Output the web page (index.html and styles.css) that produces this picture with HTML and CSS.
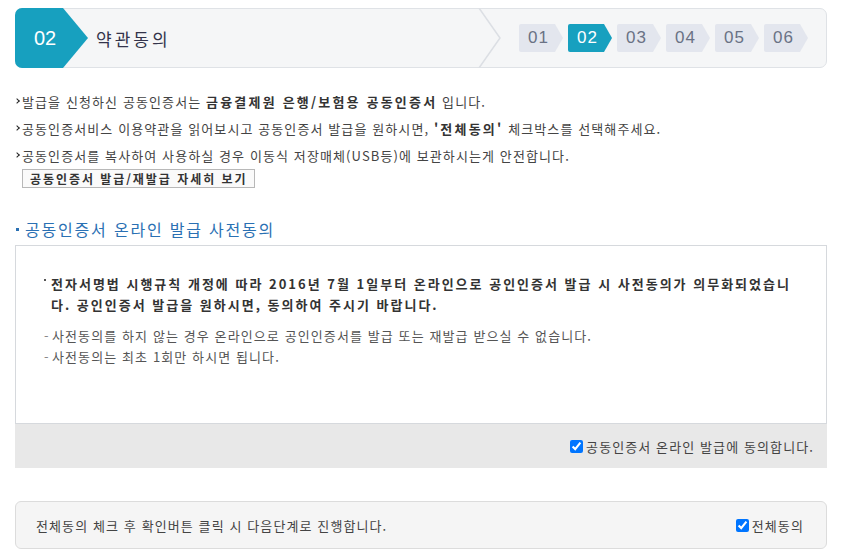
FILE: index.html
```html
<!DOCTYPE html>
<html lang="ko">
<head>
<meta charset="utf-8">
<link rel="stylesheet" href="styles.css">
</head>
<body>
<div class="wrap">
  <div class="header">
    <div class="tab"><span class="tab-num">02</span></div>
    <div class="title">약관동의</div>
    <svg class="divider" width="24" height="60" viewBox="0 0 24 60"><polyline points="1,0 22,30 1,60" fill="none" stroke="#dcdfe4" stroke-width="1.5"/></svg>
    <div class="steps">
      <span class="step">01</span>
      <span class="step active">02</span>
      <span class="step">03</span>
      <span class="step">04</span>
      <span class="step">05</span>
      <span class="step">06</span>
    </div>
  </div>

  <ul class="notice">
    <li>발급을 신청하신 공동인증서는 <b>금융결제원 은행/보험용 공동인증서</b> 입니다.</li>
    <li>공동인증서비스 이용약관을 읽어보시고 공동인증서 발급을 원하시면, <b>'전체동의'</b> 체크박스를 선택해주세요.</li>
    <li>공동인증서를 복사하여 사용하실 경우 이동식 저장매체(USB등)에 보관하시는게 안전합니다.</li>
  </ul>
  <button class="detail-btn" type="button">공동인증서 발급/재발급 자세히 보기</button>

  <h3 class="sec-title">공동인증서 온라인 발급 사전동의</h3>
  <div class="agree-box">
    <div class="agree-body">
      <p class="strong">전자서명법 시행규칙 개정에 따라 2016년 7월 1일부터 온라인으로 공인인증서 발급 시 사전동의가 의무화되었습니다. 공인인증서 발급을 원하시면, 동의하여 주시기 바랍니다.</p>
      <ul class="dash">
        <li>사전동의를 하지 않는 경우 온라인으로 공인인증서를 발급 또는 재발급 받으실 수 없습니다.</li>
        <li>사전동의는 최초 1회만 하시면 됩니다.</li>
      </ul>
    </div>
    <div class="agree-foot">
      <label class="chk"><input type="checkbox" checked> 공동인증서 온라인 발급에 동의합니다.</label>
    </div>
  </div>

  <div class="all-box">
    <span>전체동의 체크 후 확인버튼 클릭 시 다음단계로 진행합니다.</span>
    <label class="chk all"><input type="checkbox" checked>전체동의</label>
  </div>
</div>
</body>
</html>
```

FILE: styles.css
```css
* { box-sizing: border-box; }
html, body { margin: 0; padding: 0; background: #fff; }
body {
  font-family: "Noto Sans CJK KR", "Noto Sans", sans-serif;
  font-size: 13px;
  color: #444;
  letter-spacing: 1.1px;
}
.wrap {
  width: 812px;
  margin: 8px 0 0 15px;
}
.header {
  position: relative;
  height: 60px;
  border: 1px solid #dfe2e6;
  border-radius: 7px;
  background: #f5f6f7;
  display: flex;
  align-items: center;
  letter-spacing: 0;
}
.tab {
  position: absolute;
  left: -1px;
  top: -1px;
  width: 74px;
  height: 60px;
  background: #17a0bf;
  clip-path: polygon(0 0, 48px 0, 73px 30px, 48px 60px, 0 60px);
  border-radius: 7px 0 0 7px;
  display: flex;
  align-items: center;
}
.tab-num {
  color: #fff;
  font-family: "Liberation Sans", Arial, sans-serif;
  font-size: 20px;
  margin-left: 19px;
}
.title {
  margin-left: 80px;
  font-size: 17px;
  color: #33334a;
  letter-spacing: 3px;
}
.divider {
  position: absolute;
  left: 462px;
  top: -1px;
}
.steps {
  margin-left: auto;
  margin-right: 18px;
  display: flex;
  gap: 5px;
}
.step {
  width: 44px;
  height: 28px;
  background: #e3e6ee;
  color: #6a7285;
  clip-path: polygon(0 0, 36px 0, 44px 14px, 36px 28px, 0 28px);
  border-radius: 2px;
  font-family: "Liberation Sans", Arial, sans-serif;
  font-size: 17px;
  letter-spacing: 1px;
  display: flex;
  align-items: center;
  padding-left: 9px;
}
.step.active {
  background: #17a0bf;
  color: #fff;
}
.notice {
  list-style: none;
  margin: 20px 0 0;
  padding: 0;
}
.notice li {
  line-height: 27px;
  position: relative;
  padding-left: 7px;
  color: #444;
}
.notice li::before {
  content: "";
  position: absolute;
  left: 0;
  top: 11px;
  width: 3px;
  height: 3px;
  border-right: 1.5px solid #222;
  border-top: 1.5px solid #222;
  transform: rotate(45deg);
}
.notice b { color: #333; letter-spacing: 2.2px; }
.detail-btn {
  margin: 0 0 0 7px;
  height: 19px;
  padding: 0 7px;
  border: 1px solid #b8b8b8;
  background: #fafafa;
  font-family: inherit;
  font-size: 12px;
  font-weight: bold;
  color: #333;
  line-height: 17px;
  letter-spacing: 1.95px;
  display: block;
}
.sec-title {
  margin: 30px 0 0;
  font-size: 16px;
  font-weight: normal;
  color: #2a70b3;
  line-height: 22px;
  position: relative;
  padding-left: 10px;
  letter-spacing: 1.8px;
}
.sec-title::before {
  content: "";
  position: absolute;
  left: 1px;
  top: 10px;
  width: 3px;
  height: 3px;
  background: #2a70b3;
}
.agree-box {
  margin-top: 5px;
  border: 1px solid #d6d9dd;
}
.agree-body {
  height: 177px;
  padding: 27px 26px 0 28px;
  background: #fff;
}
.strong {
  margin: 0;
  font-weight: bold;
  color: #333;
  line-height: 21px;
  padding-left: 7px;
  position: relative;
  letter-spacing: 2px;
  word-break: break-all;
}
.strong::before {
  content: "";
  position: absolute;
  left: 0;
  top: 6px;
  width: 2px;
  height: 2px;
  background: #555;
}
.dash {
  list-style: none;
  margin: 10px 0 0;
  padding: 0;
}
.dash li {
  line-height: 21px;
  color: #555;
  padding-left: 8px;
  position: relative;
}
.dash li::before {
  content: "-";
  position: absolute;
  left: 0;
  top: 0;
  color: #888;
}
.agree-foot {
  height: 45px;
  background: #e8e8e8;
  border-top: 1px solid #d6d9dd;
  margin: 0 -1px -1px;
  display: flex;
  justify-content: flex-end;
  align-items: center;
  padding-right: 13px;
}
.chk {
  display: flex;
  align-items: center;
  color: #444;
}
.chk input {
  margin: 0 3px 0 0;
  width: 13px;
  height: 13px;
}
.all-box {
  margin-top: 33px;
  height: 48px;
  border: 1px solid #dcdcdc;
  border-radius: 6px;
  background: #f5f5f5;
  display: flex;
  align-items: center;
  justify-content: space-between;
  padding: 0 22px 0 20px;
  color: #444;
}
```
